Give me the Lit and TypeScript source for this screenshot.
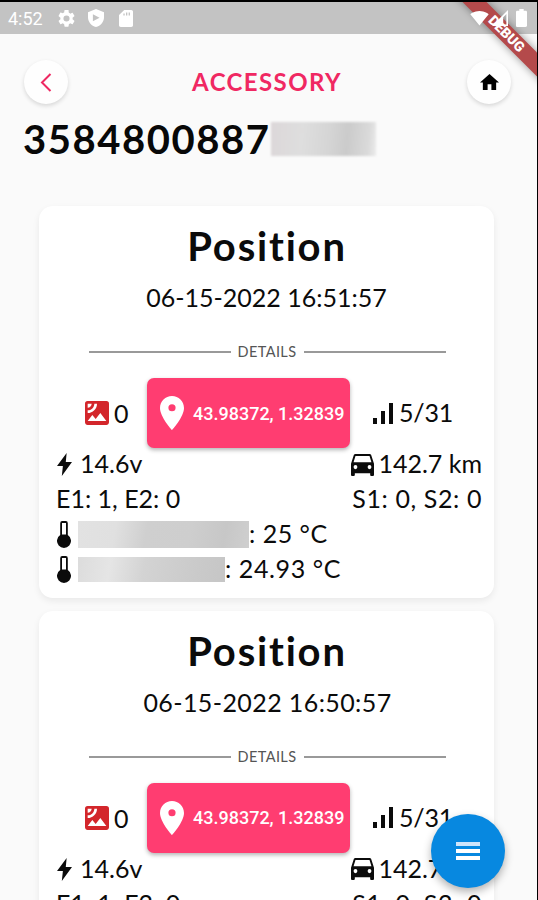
import { LitElement, html, css, svg } from "lit";
import { customElement, property } from "lit/decorators.js";

interface Probe { maskClass: string; value: string; valueClass: string; }
interface Entry { time: string; timeClass: string; }

const probes: Probe[] = [
  { maskClass: "mask wide", value: ": 25 °C", valueClass: "text temp-a" },
  { maskClass: "mask narrow", value: ": 24.93 °C", valueClass: "text temp-b" },
];
const entries: Entry[] = [
  { time: "06-15-2022 16:51:57", timeClass: "time tight" },
  { time: "06-15-2022 16:50:57", timeClass: "time" },
];

const icon = (cls: string, box: string, body: unknown) =>
  html`<svg class="icon ${cls}" viewBox=${box} preserveAspectRatio="none" fill="currentColor" aria-hidden="true">${body}</svg>`;

const gear = svg`<path d="M19.14 12.94c.04-.3.06-.61.06-.94s-.02-.64-.07-.94l2.03-1.58a.49.49 0 0 0 .12-.61l-1.92-3.32a.49.49 0 0 0-.59-.22l-2.39.96a7 7 0 0 0-1.62-.94l-.36-2.54A.48.48 0 0 0 13.92 2h-3.84a.48.48 0 0 0-.48.41l-.36 2.54a7.4 7.4 0 0 0-1.62.94l-2.39-.96a.48.48 0 0 0-.59.22L2.74 8.87a.47.47 0 0 0 .12.61l2.03 1.58a7 7 0 0 0 0 1.88l-2.03 1.58a.49.49 0 0 0-.12.61l1.92 3.32c.12.22.37.29.59.22l2.39-.96c.5.38 1.03.7 1.62.94l.36 2.54c.05.24.24.41.48.41h3.84c.24 0 .44-.17.47-.41l.36-2.54a7.4 7.4 0 0 0 1.62-.94l2.39.96c.22.08.47 0 .59-.22l1.92-3.32a.47.47 0 0 0-.12-.61zM12 15.6a3.6 3.6 0 1 1 0-7.2 3.6 3.6 0 0 1 0 7.2z"/>`;
const shield = svg`<path fill-rule="evenodd" d="M12 1 3 5v6c0 5.55 3.84 10.74 9 12 5.16-1.26 9-6.45 9-12V5zM8.5 7.5v8.5l7.5-4.25z"/>`;
const sdCard = svg`<path fill-rule="evenodd" d="M18 2h-8L4 8v12c0 1.1.9 2 2 2h12c1.1 0 2-.9 2-2V4c0-1.1-.9-2-2-2zM9 8.5V6h1.5v2.5zm3 0V5h1.5v3.5zm3 0V5h1.5v3.5z"/>`;
const wifi = svg`<path d="M12 21.5 23.6 7C23.2 6.7 18.7 3 12 3S.8 6.7.4 7z"/>`;
const cell = svg`<path d="M22 2 2 22h20zM20 7v13h-4v-9z" fill-rule="evenodd"/>`;
const battery = svg`<path d="M15.7 4H14V2h-4v2H8.3C7.6 4 7 4.6 7 5.3v15.3c0 .8.6 1.4 1.3 1.4h7.3c.8 0 1.4-.6 1.4-1.3V5.3C17 4.6 16.4 4 15.7 4z"/>`;
const home = svg`<path d="M10 20v-6h4v6h5v-8h3L12 3 2 12h3v8z"/>`;
const satellite = svg`<path fill-rule="evenodd" d="M19 3H5a2 2 0 0 0-2 2v14c0 1.1.9 2 2 2h14c1.1 0 2-.9 2-2V5a2 2 0 0 0-2-2zM5 4.99h3C8 6.65 6.66 8 5 8zM5 12v-2c2.76 0 5-2.25 5-5.01h2C12 8.86 8.87 12 5 12zm0 6 3.5-4.5 2.5 3.01L14.5 12l4.5 6z"/>`;
const pin = svg`<path d="M12 2C8.13 2 5 5.13 5 9c0 5.25 7 13 7 13s7-7.75 7-13c0-3.87-3.13-7-7-7zm0 9a2.1 2.1 0 1 1 0-4.2 2.1 2.1 0 0 1 0 4.2z"/>`;
const signalBars = svg`<path d="M0 15h4v6H0zM8 8h4v13H8zM16 0h4v21h-4z"/>`;
const bolt = svg`<path d="M9 0 0 12.5h5.5L4.5 22 14 8.5H8.2z"/>`;
const car = svg`<path fill-rule="evenodd" d="M18.92 5.01C18.72 4.42 18.16 4 17.5 4h-11c-.66 0-1.21.42-1.42 1.01L3 11v8c0 .55.45 1 1 1h1c.55 0 1-.45 1-1v-1h12v1c0 .55.45 1 1 1h1c.55 0 1-.45 1-1v-8zM6.5 15a1.500 1.500 0 1 1 0-3 1.500 1.500 0 0 1 0 3zm11 0a1.500 1.500 0 1 1 0-3 1.500 1.500 0 0 1 0 3zM5 10l1.500-4.500h11L19 10z"/>`;
const thermo = svg`<path fill-rule="evenodd" d="M3.2 2.2Q3.2 0 5.2 0h3.600q2 0 2 2.200V14A7 7 0 1 1 3.200 14zM5 2v11.500h4V2z"/>`;

@customElement("position-card")
class PositionCard extends LitElement {
  @property() time = "";
  @property() timeClass = "time";

  static styles = css`
    :host { display: block; box-sizing: border-box; width: 455px; height: 391.5px; padding: 13px 12px 0 18px;
      border-radius: 14px; background: #fff; box-shadow: 0 3px 7px rgba(0, 0, 0, .07); color: #0b0b0b;
      font-family: Lato, "Open Sans", sans-serif; font-size: 25px; white-space: nowrap; flex: none; }
    .icon { display: block; flex: none; }
    .title { margin: 0; height: 54px; line-height: 54px; font-size: 40px; font-weight: 700; text-align: center; letter-spacing: 1.8px; padding-right: 5px; }
    .time { height: 46px; line-height: 48px; text-align: center; letter-spacing: .4px; padding-right: 4px; }
    .tight { letter-spacing: 0; padding-right: 6px; }
    .details { display: flex; align-items: center; justify-content: center; height: 60px; padding-top: 6px; box-sizing: border-box; margin-right: 5px; }
    .rule { width: 142px; height: 2px; background: #999; }
    .legend { width: 73px; text-align: center; font-size: 14.5px; line-height: 20px; color: #555; letter-spacing: .4px; }
    .summary { display: flex; align-items: center; height: 70px; padding-left: 28px; margin-top: -1px; }
    .photo { width: 24px; height: 24px; color: #d3262b; }
    .count { width: 33px; padding-left: 5px; }
    .coords { display: flex; align-items: center; box-sizing: border-box; width: 203px; height: 70px; margin-left: 0; padding: 0 0 0 13px; border: 0;
      border-radius: 7px; background: #ff3d71; box-shadow: 0 2px 4px rgba(0, 0, 0, .3); color: #fff;
      font-family: Roboto, sans-serif; font-size: 18px; font-weight: 500; }
    .count { box-sizing: content-box; }
    .pin { width: 24px; height: 34px; margin-right: 9px; }
    .bars { width: 20px; height: 21px; margin-left: 23px; }
    .level { margin: -2px 0 0 6px; letter-spacing: -.2px; }
    .row { display: flex; justify-content: space-between; align-items: center; height: 35px; }
    .first { margin-top: -1px; }
    .text { margin-top: -3px; }
    .pair { display: flex; align-items: center; }
    .bolt { width: 15px; height: 23px; margin: 0 8px 0 0; }
    .car { width: 23px; height: 22px; margin-right: 4px; }
    .inputs { margin-left: -1px; }
    .outputs { letter-spacing: .6px; }
    .probe { justify-content: flex-start; }
    .thermo { width: 14px; height: 27px; margin: 0 7px 0 0; }
    .mask { height: 27px; filter: blur(.6px); }
    .wide { width: 171px; background: linear-gradient(100deg, #e2e2e2, #e0e0e0 22%, #cfcfcf 40%, #cecece 65%, #c7c7c7 85%, #cfcfcf); }
    .narrow { width: 147px; height: 25px; background: linear-gradient(100deg, #dcdcdc, #e5e5e5 22%, #d3d3d3 45%, #cacaca 80%, #c6c6c6); }
    .temp-a { letter-spacing: .5px; }
    .temp-b { letter-spacing: .6px; }
  `;

  render() {
    return html`
      <h2 class="title">Position</h2>
      <div class=${this.timeClass}>${this.time}</div>
      <div class="details"><span class="rule"></span><span class="legend">DETAILS</span><span class="rule"></span></div>
      <div class="summary">
        ${icon("photo", "3 3 18 18", satellite)}<span class="count">0</span>
        <button class="coords">${icon("pin", "5 2 14 20", pin)}43.98372, 1.32839</button>
        ${icon("bars", "0 0 20 21", signalBars)}<span class="level">5/31</span>
      </div>
      <div class="row first">
        <span class="pair">${icon("bolt", "0 0 14 22", bolt)}<span class="text">14.6v</span></span>
        <span class="pair">${icon("car", "3 4 18 16", car)}<span class="text">142.7 km</span></span>
      </div>
      <div class="row"><span class="text inputs">E1: 1, E2: 0</span><span class="text outputs">S1: 0, S2: 0</span></div>
      ${probes.map((p) => html`<div class="row probe">${icon("thermo", "0 0 14 27", thermo)}<span class=${p.maskClass}></span><span class=${p.valueClass}>${p.value}</span></div>`)}
    `;
  }
}

@customElement("app-root")
class AppRoot extends LitElement {
  static styles = css`
    :host { display: block; position: relative; box-sizing: border-box; width: 538px; height: 900px; overflow: hidden;
      border-top: 2px solid #000; border-right: 1.5px solid #000; background: #fafafa; font-family: Lato, "Open Sans", sans-serif; }
    .icon { display: block; flex: none; }
    .status { display: flex; align-items: center; height: 32px; background: #c3c3c3; color: #fff; }
    .clock { width: 50px; padding-left: 8px; font: 400 18px Roboto, sans-serif; }
    .gear { width: 17px; height: 17px; }
    .shield { width: 16px; height: 18px; margin-left: 13px; }
    .sd { width: 14px; height: 17px; margin-left: 15px; }
    .system { position: absolute; top: 0; right: 10px; z-index: 3; display: flex; align-items: center; height: 32px; color: #fff; }
    .wifi { width: 19px; height: 15px; }
    .cell { width: 16px; height: 16px; margin-left: 3px; }
    .battery { width: 11px; height: 18px; margin-left: 8px; }
    .debug { position: absolute; z-index: 2; left: 430px; top: 22px; width: 150px; height: 17px; line-height: 17px; background: #b44a4b;
      box-shadow: 0 0 8px rgba(0, 0, 0, .4); transform: rotate(45deg); color: #fff; text-align: center; text-indent: 4px;
      font-family: Roboto, sans-serif; font-size: 14px; font-weight: 900; }
    .bar { display: flex; align-items: center; justify-content: space-between; height: 44px; margin-top: 26px; padding: 0 26px 0 24px; }
    .round { display: flex; align-items: center; justify-content: center; width: 44px; height: 44px; padding: 0; border: 0; border-radius: 50%;
      background: #fefefe; box-shadow: 0 2px 4px rgba(0, 0, 0, .14); color: #000; }
    .chevron { width: 12px; height: 19px; color: #ee2862; }
    .home { width: 19px; height: 16px; }
    .heading { margin: -2px 0 0 -1px; font-size: 24px; font-weight: 700; color: #f02862; letter-spacing: 1.4px; }
    .device { display: flex; align-items: center; height: 70px; padding-left: 23px; }
    .serial { font-size: 40px; font-weight: 700; letter-spacing: 1.55px; color: #080808; }
    .mask { width: 105px; height: 34px; filter: blur(.8px); background: linear-gradient(95deg, #dcd7d9, #dedede 30%, #d5d5d5 55%, #cbcbcb 72%, #dadada 92%, #ececec); }
    .list { display: flex; flex-direction: column; gap: 13px; padding: 32px 0 0 39px; }
    .fab { position: absolute; left: 431px; top: 812px; width: 74px; height: 74px; padding: 0; border: 0; border-radius: 50%; z-index: 2;
      display: flex; flex-direction: column; align-items: center; justify-content: center; gap: 3px; background: #0788e0;
      box-shadow: 0 4px 8px rgba(0, 0, 0, .3); }
    .line { width: 24px; height: 4px; background: #fff; }
    .soft { background: #cfe5fb; }
  `;

  render() {
    return html`
      <div class="status">
        <span class="clock">4:52</span>
        ${icon("gear", "2 2 20 20", gear)}${icon("shield", "3 1 18 22", shield)}${icon("sd", "4 2 16 20", sdCard)}
      </div>
      <div class="system">
        ${icon("wifi", "0 3 24 19", wifi)}${icon("cell", "2 2 20 20", cell)}${icon("battery", "7 2 10 20", battery)}
      </div>
      <div class="debug">DEBUG</div>
      <div class="bar">
        <button class="round" aria-label="Back">
          <svg class="icon chevron" viewBox="0 0 12 19" fill="none" stroke="currentColor" stroke-width="2"><path d="M10.5 1 2 9.5l8.5 8.5"/></svg>
        </button>
        <h1 class="heading">ACCESSORY</h1>
        <button class="round" aria-label="Home">${icon("home", "2 3 20 17", home)}</button>
      </div>
      <div class="device"><span class="serial">3584800887</span><span class="mask"></span></div>
      <div class="list">${entries.map((e) => html`<position-card .time=${e.time} .timeClass=${e.timeClass}></position-card>`)}</div>
      <button class="fab" aria-label="Menu"><span class="line soft"></span><span class="line"></span><span class="line"></span></button>
    `;
  }
}
